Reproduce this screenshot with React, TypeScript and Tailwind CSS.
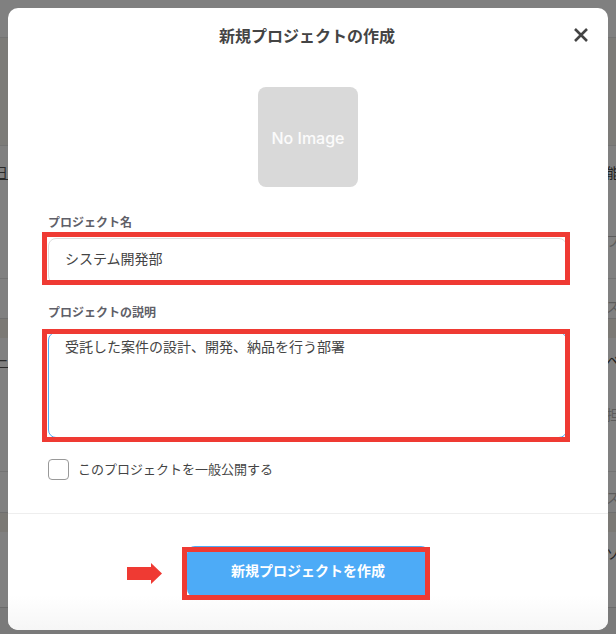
import React from 'react';

const jp = '[font-family:"Noto_Sans_CJK_JP","Liberation_Sans",sans-serif]';

const BgCell: React.FC<{ className: string; left?: string; right?: string; rightDark?: boolean }> = ({
  className,
  left,
  right,
  rightDark
}) => (
  <div className={`flex justify-between text-[14px] leading-5 ${className}`}>
    <span className="-ml-[6px] text-[#2a2a2a] underline">{left}</span>
    <span className={`w-[10px] whitespace-nowrap ${rightDark ? 'text-[#1f1f1f]' : 'text-[#5c5c5c]'}`}>{right}</span>
  </div>
);

export default function App() {
  return (
    <div className={`relative h-[634px] w-[616px] overflow-hidden bg-[#808080] ${jp}`}>
      {/* Page behind the dialog */}
      <div className="flex flex-col">
        <div className="h-[37px]" />
        <div className="h-[109px] border-y border-[#737373] bg-[#7c7b78]" />
        <BgCell className="h-[58px] pt-[16px]" left="日" right="能" rightDark />
        <BgCell className="h-[74px] pt-[26px]" right="フ" />
        <BgCell className="h-[40px] border-t border-[#737373] pt-[17px]" right="ス" />
        <div className="h-[20px] border-t border-[#6f6f6f] bg-[#7b7975]" />
        <BgCell className="h-[58px] pt-[12px]" left="ー" right="ベ" rightDark />
        <BgCell className="h-[75px] pt-[8px]" right="担" />
        <BgCell className="h-[41px] border-t border-[#737373] pt-[15px]" right="ス" />
        <div className="h-[20px] border-t border-[#6f6f6f] bg-[#7b7975]" />
        <BgCell className="h-[75px] pt-[11px]" right="ソ" rightDark />
        <div className="h-[27px] border-t border-[#6b6b6b] bg-[#7a7a7a]" />
      </div>

      {/* Dialog */}
      <div className="absolute left-2 top-2 flex h-[622px] w-[600px] flex-col overflow-hidden rounded-[10px] bg-white text-[#444]">
        <div className="relative flex h-[56px] items-center justify-center pb-[2px] pr-[2px]">
          <h2 className="text-[16px] font-bold leading-6 text-[#444]">新規プロジェクトの作成</h2>
          <button className="absolute left-[566px] top-[20px] text-[#444]">
            <svg width="14" height="14" viewBox="0 0 14 14" className="block">
              <path d="M1 1 13 13M13 1 1 13" stroke="currentColor" strokeWidth="2.6" fill="none" />
            </svg>
          </button>
        </div>

        <div className="flex flex-1 flex-col px-10">
          <div className="mt-[23px] flex h-[100px] w-[100px] items-center justify-center self-center rounded-lg bg-[#d9d9d9] pt-[1px] font-['Inter',sans-serif] text-[16px] font-medium text-white/90">
            No Image
          </div>

          <label className="mt-[27px] text-[12px] font-bold leading-4 text-[#5f5f68]">プロジェクト名</label>
          <div className="mr-[1px] mt-[8px] flex h-[46px] items-center rounded-lg border border-[#ddd] pb-[6px] pl-[16px] text-[14px] text-[#444]">
            システム開発部
          </div>

          <label className="mt-[20px] text-[12px] font-bold leading-4 text-[#5f5f68]">プロジェクトの説明</label>
          <div className="mr-[1px] mt-[12px] h-[106px] rounded-lg border border-[#4dabf7] px-[16px] pt-[3px] text-[14px] leading-5 text-[#444]">
            受託した案件の設計、開発、納品を行う部署
          </div>

          <div className="mt-[21px] flex items-start gap-[9px]">
            <div className="h-[21px] w-[21px] rounded-[4px] border border-[#999] bg-white" />
            <span className="-mt-[1px] text-[13px] leading-[21px] text-[#444]">このプロジェクトを一般公開する</span>
          </div>
        </div>

        <div className="flex h-[117px] justify-center border-t border-[#eee] bg-linear-to-b from-white from-[70%] to-[#f6f6f6] pt-[32px]">
          <button className="h-[51px] w-[242px] rounded-lg bg-[#4dabf7] pb-[2px] text-[14px] font-bold text-white">
            新規プロジェクトを作成
          </button>
        </div>
      </div>

      {/* Red annotations on top of the screenshot */}
      <div className="absolute left-[42px] top-[232px] h-[53px] w-[528px] border-[5px] border-[#ef3a33]" />
      <div className="absolute left-[42px] top-[329px] h-[113px] w-[528px] border-[5px] border-[#ef3a33]" />
      <div className="absolute left-[182px] top-[547px] h-[53px] w-[248px] border-[5px] border-[#ef3a33]" />
      <svg className="absolute left-[127px] top-[563px]" width="35" height="21" viewBox="0 0 35 21">
        <path d="M0 4H24V0L35 10.5 24 21V17H0Z" fill="#ef3a33" />
      </svg>
    </div>
  );
}
